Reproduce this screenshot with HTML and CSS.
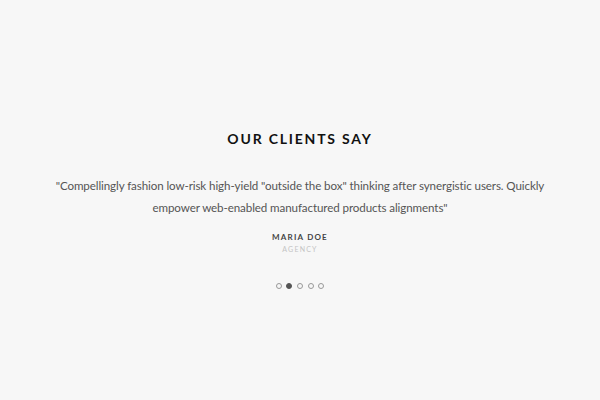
FILE: index.html
```html
<!DOCTYPE html>
<html>
<head>
<meta charset="utf-8">
<link rel="stylesheet" href="styles.css">
</head>
<body>
<section class="testimonials">
  <h2 class="title">OUR CLIENTS SAY</h2>
  <p class="quote">"Compellingly fashion low-risk high-yield "outside the box" thinking after synergistic users. Quickly empower web-enabled manufactured products alignments"</p>
  <div class="author">MARIA DOE</div>
  <div class="role">AGENCY</div>
  <div class="dots">
    <span class="dot"></span>
    <span class="dot active"></span>
    <span class="dot"></span>
    <span class="dot"></span>
    <span class="dot"></span>
  </div>
</section>
</body>
</html>
```
FILE: styles.css
```css
html, body {
  margin: 0;
  padding: 0;
  background: #f7f7f7;
}
body {
  width: 600px;
  height: 400px;
  overflow: hidden;
  font-family: "Lato", "Noto Sans", sans-serif;
}
.testimonials {
  display: flex;
  flex-direction: column;
  align-items: center;
  padding-top: 129px;
}
.title {
  margin: 0;
  font-family: "Lato", sans-serif;
  font-weight: 700;
  font-size: 14px;
  line-height: 20px;
  letter-spacing: 1.8px;
  color: #111;
}
.quote {
  margin: 26px 0 0;
  width: 500px;
  text-align: center;
  font-size: 11.6px;
  letter-spacing: -0.1px;
  line-height: 22px;
  color: #555;
}
.author {
  margin-top: 12px;
  font-size: 8px;
  line-height: 12px;
  font-weight: 700;
  letter-spacing: 1.2px;
  color: #444;
}
.role {
  font-size: 7px;
  line-height: 12px;
  letter-spacing: 1.2px;
  color: #c4c4c4;
}
.dots {
  display: flex;
  gap: 4.7px;
  margin-top: 28px;
}
.dot {
  width: 4px;
  height: 4px;
  border: 1px solid #999;
  border-radius: 50%;
}
.dot.active {
  background: #555;
  border-color: #555;
}
```
